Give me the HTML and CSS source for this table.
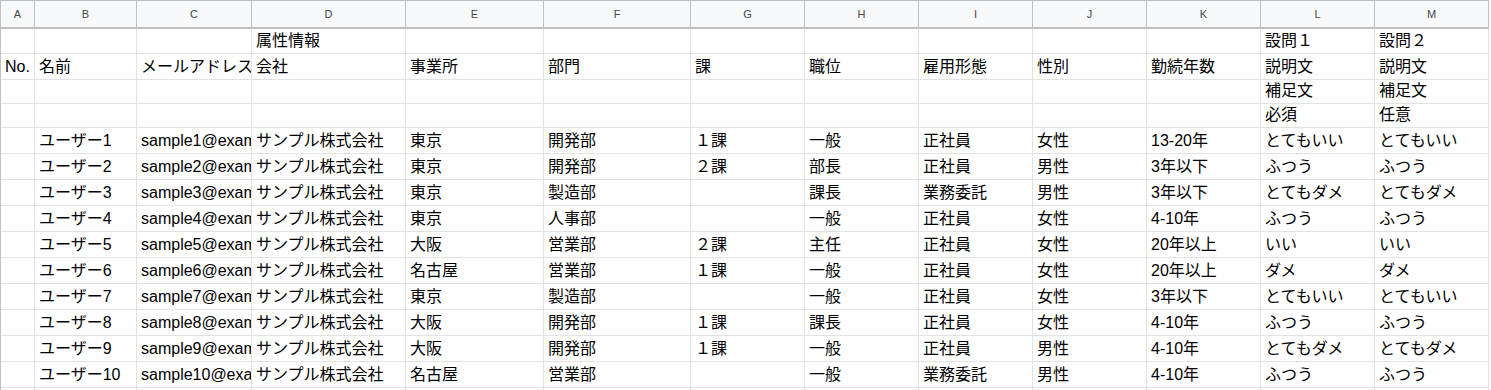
FILE: index.html
```html
<!DOCTYPE html>
<html lang="ja">
<head>
<meta charset="utf-8">
<link rel="stylesheet" href="styles.css">
</head>
<body>
<div class="sheet">
  <div class="c h">A</div><div class="c h">B</div><div class="c h">C</div><div class="c h">D</div><div class="c h">E</div><div class="c h">F</div><div class="c h">G</div><div class="c h">H</div><div class="c h">I</div><div class="c h">J</div><div class="c h">K</div><div class="c h">L</div><div class="c h">M</div>

  <div class="c"></div><div class="c"></div><div class="c"></div><div class="c">属性情報</div><div class="c"></div><div class="c"></div><div class="c"></div><div class="c"></div><div class="c"></div><div class="c"></div><div class="c"></div><div class="c">設問１</div><div class="c">設問２</div>

  <div class="c">No.</div><div class="c">名前</div><div class="c">メールアドレス</div><div class="c">会社</div><div class="c">事業所</div><div class="c">部門</div><div class="c">課</div><div class="c">職位</div><div class="c">雇用形態</div><div class="c">性別</div><div class="c">勤続年数</div><div class="c">説明文</div><div class="c">説明文</div>

  <div class="c"></div><div class="c"></div><div class="c"></div><div class="c"></div><div class="c"></div><div class="c"></div><div class="c"></div><div class="c"></div><div class="c"></div><div class="c"></div><div class="c"></div><div class="c">補足文</div><div class="c">補足文</div>

  <div class="c"></div><div class="c"></div><div class="c"></div><div class="c"></div><div class="c"></div><div class="c"></div><div class="c"></div><div class="c"></div><div class="c"></div><div class="c"></div><div class="c"></div><div class="c">必須</div><div class="c">任意</div>

  <div class="c"></div><div class="c">ユーザー1</div><div class="c">sample1@example.com</div><div class="c">サンプル株式会社</div><div class="c">東京</div><div class="c">開発部</div><div class="c">１課</div><div class="c">一般</div><div class="c">正社員</div><div class="c">女性</div><div class="c">13-20年</div><div class="c">とてもいい</div><div class="c">とてもいい</div>

  <div class="c"></div><div class="c">ユーザー2</div><div class="c">sample2@example.com</div><div class="c">サンプル株式会社</div><div class="c">東京</div><div class="c">開発部</div><div class="c">２課</div><div class="c">部長</div><div class="c">正社員</div><div class="c">男性</div><div class="c">3年以下</div><div class="c">ふつう</div><div class="c">ふつう</div>

  <div class="c"></div><div class="c">ユーザー3</div><div class="c">sample3@example.com</div><div class="c">サンプル株式会社</div><div class="c">東京</div><div class="c">製造部</div><div class="c"></div><div class="c">課長</div><div class="c">業務委託</div><div class="c">男性</div><div class="c">3年以下</div><div class="c">とてもダメ</div><div class="c">とてもダメ</div>

  <div class="c"></div><div class="c">ユーザー4</div><div class="c">sample4@example.com</div><div class="c">サンプル株式会社</div><div class="c">東京</div><div class="c">人事部</div><div class="c"></div><div class="c">一般</div><div class="c">正社員</div><div class="c">女性</div><div class="c">4-10年</div><div class="c">ふつう</div><div class="c">ふつう</div>

  <div class="c"></div><div class="c">ユーザー5</div><div class="c">sample5@example.com</div><div class="c">サンプル株式会社</div><div class="c">大阪</div><div class="c">営業部</div><div class="c">２課</div><div class="c">主任</div><div class="c">正社員</div><div class="c">女性</div><div class="c">20年以上</div><div class="c">いい</div><div class="c">いい</div>

  <div class="c"></div><div class="c">ユーザー6</div><div class="c">sample6@example.com</div><div class="c">サンプル株式会社</div><div class="c">名古屋</div><div class="c">営業部</div><div class="c">１課</div><div class="c">一般</div><div class="c">正社員</div><div class="c">女性</div><div class="c">20年以上</div><div class="c">ダメ</div><div class="c">ダメ</div>

  <div class="c"></div><div class="c">ユーザー7</div><div class="c">sample7@example.com</div><div class="c">サンプル株式会社</div><div class="c">東京</div><div class="c">製造部</div><div class="c"></div><div class="c">一般</div><div class="c">正社員</div><div class="c">女性</div><div class="c">3年以下</div><div class="c">とてもいい</div><div class="c">とてもいい</div>

  <div class="c"></div><div class="c">ユーザー8</div><div class="c">sample8@example.com</div><div class="c">サンプル株式会社</div><div class="c">大阪</div><div class="c">開発部</div><div class="c">１課</div><div class="c">課長</div><div class="c">正社員</div><div class="c">女性</div><div class="c">4-10年</div><div class="c">ふつう</div><div class="c">ふつう</div>

  <div class="c"></div><div class="c">ユーザー9</div><div class="c">sample9@example.com</div><div class="c">サンプル株式会社</div><div class="c">大阪</div><div class="c">開発部</div><div class="c">１課</div><div class="c">一般</div><div class="c">正社員</div><div class="c">男性</div><div class="c">4-10年</div><div class="c">とてもダメ</div><div class="c">とてもダメ</div>

  <div class="c"></div><div class="c">ユーザー10</div><div class="c">sample10@example.com</div><div class="c">サンプル株式会社</div><div class="c">名古屋</div><div class="c">営業部</div><div class="c"></div><div class="c">一般</div><div class="c">業務委託</div><div class="c">男性</div><div class="c">4-10年</div><div class="c">ふつう</div><div class="c">ふつう</div>

  <div class="c f"></div><div class="c f"></div><div class="c f"></div><div class="c f"></div><div class="c f"></div><div class="c f"></div><div class="c f"></div><div class="c f"></div><div class="c f"></div><div class="c f"></div><div class="c f"></div><div class="c f"></div><div class="c f"></div>
</div>
</body>
</html>
```

FILE: styles.css
```css
html, body {
  margin: 0;
  padding: 0;
  background: #ffffff;
}

.sheet {
  display: grid;
  grid-template-columns: 34px 102px 115px 154px 138px 147px repeat(7, 114px);
  grid-template-rows: 28px 25px 26px 24px 24px repeat(10, 26px) 2px;
  border-left: 1px solid #c0c0c0;
  border-top: 1px solid #c0c0c0;
  width: max-content;
  font-family: "Liberation Sans", "Noto Sans CJK JP", sans-serif;
  font-size: 16px;
  color: #000000;
}

.c {
  box-sizing: border-box;
  border-right: 1px solid #e2e2e2;
  border-bottom: 1px solid #e2e2e2;
  padding: 0 3px 3px 4px;
  overflow: hidden;
  white-space: nowrap;
  display: flex;
  align-items: flex-end;
  line-height: 19px;
}

.f {
  border-bottom: none;
}

.h {
  background: #f8f9fa;
  border-right-color: #c0c0c0;
  border-bottom: 2px solid #c0c0c0;
  justify-content: center;
  align-items: center;
  padding: 0;
  font-size: 11px;
  color: #444746;
}
```
